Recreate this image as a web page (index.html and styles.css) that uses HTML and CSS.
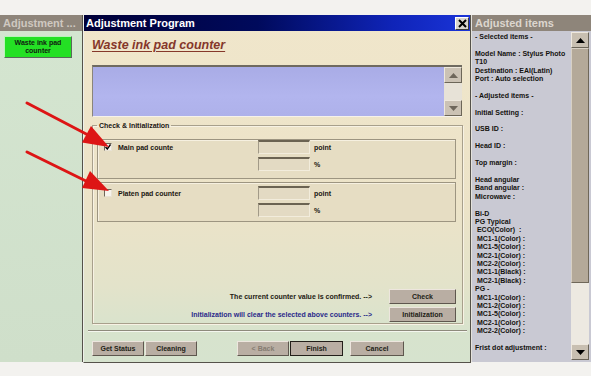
FILE: index.html
```html
<!DOCTYPE html>
<html>
<head>
<meta charset="utf-8">
<link rel="stylesheet" href="styles.css">
</head>
<body>
<div class="screen">
  <div class="left">
    <div class="ptitle left-title">Adjustment ...</div>
    <div class="left-body">
      <div class="green-btn">Waste ink pad<br>counter</div>
    </div>
  </div>

  <div class="main">
    <div class="main-title">
      <span>Adjustment Program</span>
      <div class="close"><svg width="9" height="9" viewBox="0 0 9 9"><path d="M1 1L8 8M8 1L1 8" stroke="#000" stroke-width="2"/></svg></div>
    </div>
    <div class="main-body">
      <div class="heading">Waste ink pad counter</div>
      <div class="listbox">
        <div class="list-area"></div>
        <div class="vscroll">
          <div class="sbtn"><svg width="9" height="5" viewBox="0 0 9 5"><path d="M0 5L4.5 0L9 5Z" fill="#6e665a"/></svg></div>
          <div class="strack"></div>
          <div class="sbtn"><svg width="9" height="5" viewBox="0 0 9 5"><path d="M0 0L4.5 5L9 0Z" fill="#6e665a"/></svg></div>
        </div>
      </div>
      <fieldset class="group">
        <legend>Check &amp; Initialization</legend>
        <div class="pad-box first">
          <div class="pad-left"><span class="chk"><svg width="6" height="6" viewBox="0 0 6 6"><path d="M0.5 3L2.3 5L5.5 0.5" stroke="#000" stroke-width="1.4" fill="none"/></svg></span><span>Main pad counte</span></div>
          <div class="pad-fields">
            <div class="field-row"><span class="input"></span><span>point</span></div>
            <div class="field-row"><span class="input"></span><span>%</span></div>
          </div>
        </div>
        <div class="pad-box">
          <div class="pad-left"><span class="chk"></span><span>Platen pad counter</span></div>
          <div class="pad-fields">
            <div class="field-row"><span class="input"></span><span>point</span></div>
            <div class="field-row"><span class="input"></span><span>%</span></div>
          </div>
        </div>
        <div class="actions">
          <div class="action-row"><span class="action-text">The current counter value is confirmed. --&gt;</span><div class="btn act-btn">Check</div></div>
          <div class="action-row"><span class="action-text blue">Initialization will clear the selected above counters. --&gt;</span><div class="btn act-btn">Initialization</div></div>
        </div>
      </fieldset>
      <div class="sep"></div>
      <div class="bottom-btns">
        <div class="btn-pair">
          <div class="btn bb">Get Status</div>
          <div class="btn bb">Cleaning</div>
        </div>
        <div class="btn-pair nav">
          <div class="btn bb disabled">&lt; Back</div>
          <div class="btn bb default">Finish</div>
          <div class="btn bb cancel">Cancel</div>
        </div>
      </div>
    </div>
  </div>

  <div class="right">
    <div class="ptitle right-title">Adjusted items</div>
    <div class="right-body">
      <div class="items">- Selected items -

Model Name : Stylus Photo
T10
Destination : EAI(Latin)
Port : Auto selection

- Adjusted items -

Initial Setting :

USB ID :

Head ID :

Top margin :

Head angular
Band angular :
Microwave :

Bi-D
PG Typical
 ECO(Color)  :
 MC1-1(Color) :
 MC1-5(Color) :
 MC2-1(Color) :
 MC2-2(Color) :
 MC1-1(Black) :
 MC2-1(Black) :
PG -
 MC1-1(Color) :
 MC1-2(Color) :
 MC1-5(Color) :
 MC2-1(Color) :
 MC2-2(Color) :

Frist dot adjustment :</div>
      <div class="rscroll">
        <div class="rbtn"><svg width="9" height="5" viewBox="0 0 9 5"><path d="M0 5L4.5 0L9 5Z" fill="#000"/></svg></div>
        <div class="rthumb"></div>
        <div class="rtrack"></div>
        <div class="rbtn"><svg width="9" height="5" viewBox="0 0 9 5"><path d="M0 0L4.5 5L9 0Z" fill="#000"/></svg></div>
      </div>
    </div>
  </div>

  <svg class="arrows" width="591" height="376" viewBox="0 0 591 376">
    <line x1="27" y1="88" x2="90" y2="121" stroke="#dd1515" stroke-width="3" stroke-linecap="round"/>
    <path d="M109 132L82 127.5L91 111Z" fill="#dd1515"/>
    <line x1="27" y1="137" x2="90" y2="168" stroke="#dd1515" stroke-width="3" stroke-linecap="round"/>
    <path d="M109 176L82 173L90 156Z" fill="#dd1515"/>
  </svg>
</div>
</body>
</html>
```

FILE: styles.css
```css
* { box-sizing: border-box; }
html, body { margin: 0; padding: 0; }
body {
  background: #f3f2ef;
  font-family: "Liberation Sans", Arial, sans-serif;
  font-size: 7px;
  font-weight: bold;
  color: #1a1610;
  width: 591px;
  height: 376px;
  overflow: hidden;
}
.screen {
  position: relative;
  margin-top: 15px;
  height: 348px;
  display: flex;
}
.arrows {
  position: absolute;
  left: 0;
  top: 0;
  pointer-events: none;
}
.ptitle {
  height: 16px;
  line-height: 16px;
  font-size: 11px;
  font-weight: bold;
  background: #8e857a;
  white-space: nowrap;
  overflow: hidden;
}
/* Left panel */
.left {
  width: 83px;
  border-right: 1px solid #55524a;
  display: flex;
  flex-direction: column;
  height: 347px;
}
.left-title { color: #cfc8c0; padding-left: 3px; }
.left-body {
  flex: 1;
  background: linear-gradient(180deg, #d4e5d0, #cfdfca);
  padding: 5px 0 0 4px;
}
.green-btn {
  width: 68px;
  height: 22px;
  background: #24e024;
  border: 1px solid;
  border-color: #b8f4b8 #5a6a5a #5a6a5a #b8f4b8;
  text-align: center;
  line-height: 8px;
  padding-top: 2px;
  color: #102010;
}
/* Main window */
.main {
  width: 388px;
  border-left: 1px solid #eef0ea;
  border-right: 1px solid #55524a;
  border-bottom: 1px solid #55524a;
  display: flex;
  flex-direction: column;
  background: linear-gradient(180deg, #f0e6cb 0%, #ece3c8 55%, #e3e3ca 78%, #d7e3cd 92%, #d6e3ce 100%);
}
.main-title {
  height: 16px;
  background: linear-gradient(90deg, #000038 0%, #000a5c 45%, #0f24b8 80%, #1a34d8 100%);
  color: #fff;
  font-size: 11px;
  display: flex;
  align-items: center;
  justify-content: space-between;
  padding: 0 1px 0 2px;
}
.close {
  width: 14px;
  height: 13px;
  background: #d9d5cd;
  border: 1px solid;
  border-color: #fff #3a3a3a #3a3a3a #fff;
  display: flex;
  align-items: center;
  justify-content: center;
}
.main-body {
  flex: 1;
  display: flex;
  flex-direction: column;
  padding: 0 7px 0 8px;
}
.heading {
  margin-top: 6px;
  height: 16px;
  font-size: 12.5px;
  line-height: 16px;
  font-style: italic;
  color: #85372a;
  text-decoration: underline;
  text-decoration-thickness: 1px;
  text-underline-offset: 2px;
}
.listbox {
  margin-top: 12px;
  height: 52px;
  display: flex;
  border-top: 2px solid #6f6a60;
  border-left: 1px solid #8a857a;
  border-bottom: 1px solid #f6f2ea;
  background: #adb0ea;
  width: 370px;
}
.list-area {
  flex: 1;
  background: linear-gradient(180deg, #a9ace6, #b2b5ee 60%, #aeb1ea);
}
.vscroll {
  width: 18px;
  display: flex;
  flex-direction: column;
  background: #e7e2d7;
}
.sbtn {
  height: 16px;
  background: #cbc2b4;
  border: 1px solid;
  border-color: #eee8dc #6c6658 #6c6658 #eee8dc;
  display: flex;
  align-items: center;
  justify-content: center;
}
.strack { flex: 1; }
.group {
  margin: 4px 0 0 0;
  width: 371px;
  padding: 9px 6px 1px 4px;
  border: 1px solid #a8a08c;
  box-shadow: 1px 1px 0 #f7f2e4, inset 1px 1px 0 #f7f2e4;
  min-inline-size: 0;
}
.group legend {
  padding: 0 2px;
  margin-left: 0;
  line-height: 9px;
  height: 9px;
}
.pad-box {
  width: 359px;
  height: 40px;
  margin-bottom: 3px;
  display: flex;
  padding: 3px 0 0 6px;
  border: 1px solid #9d9581;
  box-shadow: inset 1px 1px 0 #f6f0e0;
  background: #e6ddc3;
}
.pad-box.first {
  padding-top: 0;
}
.pad-left {
  width: 154px;
  height: 14px;
  display: flex;
  align-items: center;
  gap: 6px;
}
.chk {
  width: 8px;
  height: 8px;
  background: #f7f3ec;
  border: 1px solid;
  border-color: #6e6658 #e8e2d4 #e8e2d4 #6e6658;
  display: flex;
  align-items: center;
  justify-content: center;
}
.pad-fields {
  display: flex;
  flex-direction: column;
  gap: 3px;
}
.field-row {
  display: flex;
  align-items: center;
  gap: 4px;
  height: 14px;
}
.input {
  width: 52px;
  height: 14px;
  background: #e3dac3;
  border-top: 2px solid #6b6352;
  border-left: 1px solid #a29a88;
  border-right: 1px solid #f2ecdc;
  border-bottom: 1px solid #f2ecdc;
}
.actions {
  margin-top: 67px;
  display: flex;
  flex-direction: column;
  gap: 3px;
}
.action-row {
  display: flex;
  align-items: center;
  justify-content: flex-end;
  gap: 17px;
}
.action-text { color: #1e1a12; }
.action-text.blue { color: #2a2a8a; }
.btn {
  background: #b9aea3;
  border: 1px solid;
  border-color: #ede6de #5e574e #5e574e #ede6de;
  display: flex;
  align-items: center;
  justify-content: center;
  color: #221e16;
}
.act-btn {
  width: 67px;
  height: 15px;
}
.sep {
  margin: 6px -4px 0 -4px;
  height: 2px;
  border-top: 1px solid #8e8a7c;
  border-bottom: 1px solid #f4f6ee;
}
.bottom-btns {
  margin-top: 9px;
  display: flex;
  gap: 40px;
}
.btn-pair {
  display: flex;
  gap: 1px;
}
.bb {
  width: 52px;
  height: 15px;
}
.bb.disabled { color: #857c72; }
.bb.default { border: 1px solid #231f1a; width: 53px; }
.bb.cancel { margin-left: 6px; width: 54px; }
/* Right panel */
.right {
  flex: 1;
  border-left: 1px solid #e4e2dc;
  display: flex;
  flex-direction: column;
  height: 347px;
}
.right-title { color: #dcd6ce; padding-left: 3px; }
.right-body {
  flex: 1;
  display: flex;
  background: #c9c9d3;
  padding-bottom: 2px;
}
.items {
  flex: 1;
  white-space: pre;
  line-height: 8.4px;
  padding: 2px 0 0 3px;
  color: #14120e;
  overflow: hidden;
}
.rscroll {
  width: 18px;
  margin: 1px 2px 0 0;
  display: flex;
  flex-direction: column;
  background: #ede9e1;
}
.rbtn {
  height: 16px;
  background: #c8bfb1;
  border: 1px solid;
  border-color: #eee8de #6a6458 #6a6458 #eee8de;
  display: flex;
  align-items: center;
  justify-content: center;
}
.rthumb {
  height: 235px;
  background: #b4a999;
  border: 1px solid;
  border-color: #d8d0c4 #6f6759 #6f6759 #d8d0c4;
}
.rtrack { flex: 1; }
```
